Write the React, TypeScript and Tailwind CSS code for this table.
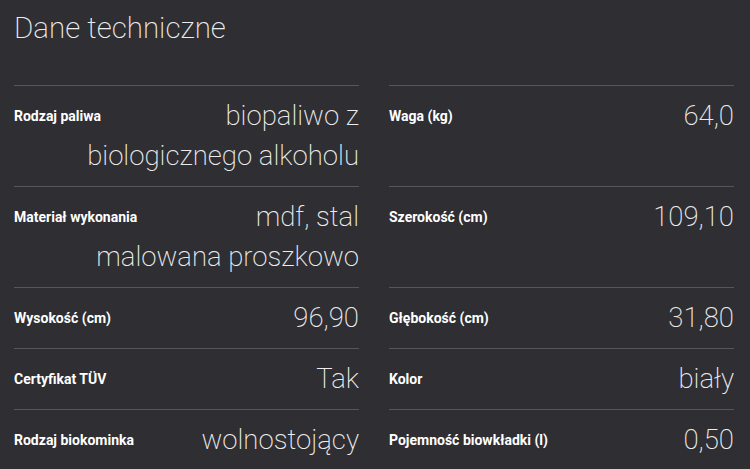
const specs: [string, string][][] = [
  [
    ['Rodzaj paliwa', 'biopaliwo z biologicznego alkoholu'],
    ['Waga (kg)', '64,0'],
  ],
  [
    ['Materiał wykonania', 'mdf, stal malowana proszkowo'],
    ['Szerokość (cm)', '109,10'],
  ],
  [
    ['Wysokość (cm)', '96,90'],
    ['Głębokość (cm)', '31,80'],
  ],
  [
    ['Certyfikat TÜV', 'Tak'],
    ['Kolor', 'biały'],
  ],
  [
    ['Rodzaj biokominka', 'wolnostojący'],
    ['Pojemność biowkładki (l)', '0,50'],
  ],
];

// label floats so a wrapped value can use the full width on its next lines
const SpecCell = ({ label, value }: { label: string; value: string }) => (
  <div className="flow-root border-t border-[#56565c] py-[10px]">
    <span className="float-left mr-4 text-[14px] font-bold leading-[40px] text-white">{label}</span>
    <p className="text-right text-[27.5px] font-extralight leading-[40px] text-[#ececec]">{value}</p>
  </div>
);

export default function App() {
  return (
    <div className="h-[469px] w-[750px] overflow-hidden bg-[#2e2e33] pl-[14px] pr-[16px] pt-[10px] font-['Roboto',sans-serif]">
      <h2 className="text-[29.5px] font-extralight leading-[36px] text-[#ececec]">Dane techniczne</h2>
      <div className="mt-[39px] grid grid-cols-2 gap-x-[30px]">
        {specs.map((row, i) =>
          row.map(([label, value]) => <SpecCell key={`${i}-${label}`} label={label} value={value} />)
        )}
      </div>
    </div>
  );
}
